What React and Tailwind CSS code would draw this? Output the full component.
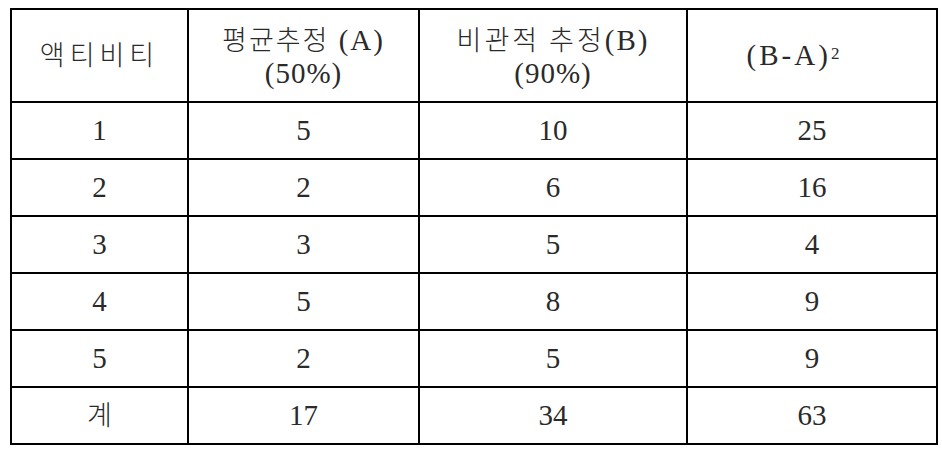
import React from "react"

const rows = [
    ["1", "5", "10", "25"],
    ["2", "2", "6", "16"],
    ["3", "3", "5", "4"],
    ["4", "5", "8", "9"],
    ["5", "2", "5", "9"],
    ["계", "17", "34", "63"],
]

const cell = "border-2 border-black text-center align-middle font-normal"
const ko = "[font-family:'Noto_Sans_CJK_KR',sans-serif] font-light text-[27px]"

const App = () => {
    return (
        <div className="w-[942px] h-[450px] overflow-hidden bg-white pt-[8px] pl-[10px] text-[#2a2a2a] [font-family:'Liberation_Serif','Noto_Sans_CJK_KR',serif] text-[29px]">
            <table className="border-collapse table-fixed w-[926px]">
                <colgroup>
                    <col className="w-[177px]" />
                    <col className="w-[231px]" />
                    <col className="w-[268px]" />
                    <col className="w-[250px]" />
                </colgroup>
                <thead>
                    <tr className="h-[93px]">
                        <th className={cell}>
                            <span className={ko + " tracking-[5px]"}>액티비티</span>
                        </th>
                        <th className={cell + " leading-[33px]"}>
                            <div><span className={ko + " tracking-[2px]"}>평균추정</span><span className="tracking-[2px]"> (A)</span></div>
                            <div className="tracking-[1px]">(50%)</div>
                        </th>
                        <th className={cell + " leading-[33px]"}>
                            <div><span className={ko + " tracking-[3px]"}>비관적 추정</span><span className="tracking-[2px]">(B)</span></div>
                            <div className="tracking-[1px]">(90%)</div>
                        </th>
                        <th className={cell + " pr-[38px]"}>
                            <span className="tracking-[3px]">(B-A)</span><sup className="text-[17px] relative -top-[6px]">2</sup>
                        </th>
                    </tr>
                </thead>
                <tbody>
                    {rows.map((r, i) => (
                        <tr key={i} className="h-[57px]">
                            {r.map((v, j) => (
                                <td key={j} className={cell}>
                                    {v === "계" ? <span className={ko}>{v}</span> : v}
                                </td>
                            ))}
                        </tr>
                    ))}
                </tbody>
            </table>
        </div>
    )
}

export default App
